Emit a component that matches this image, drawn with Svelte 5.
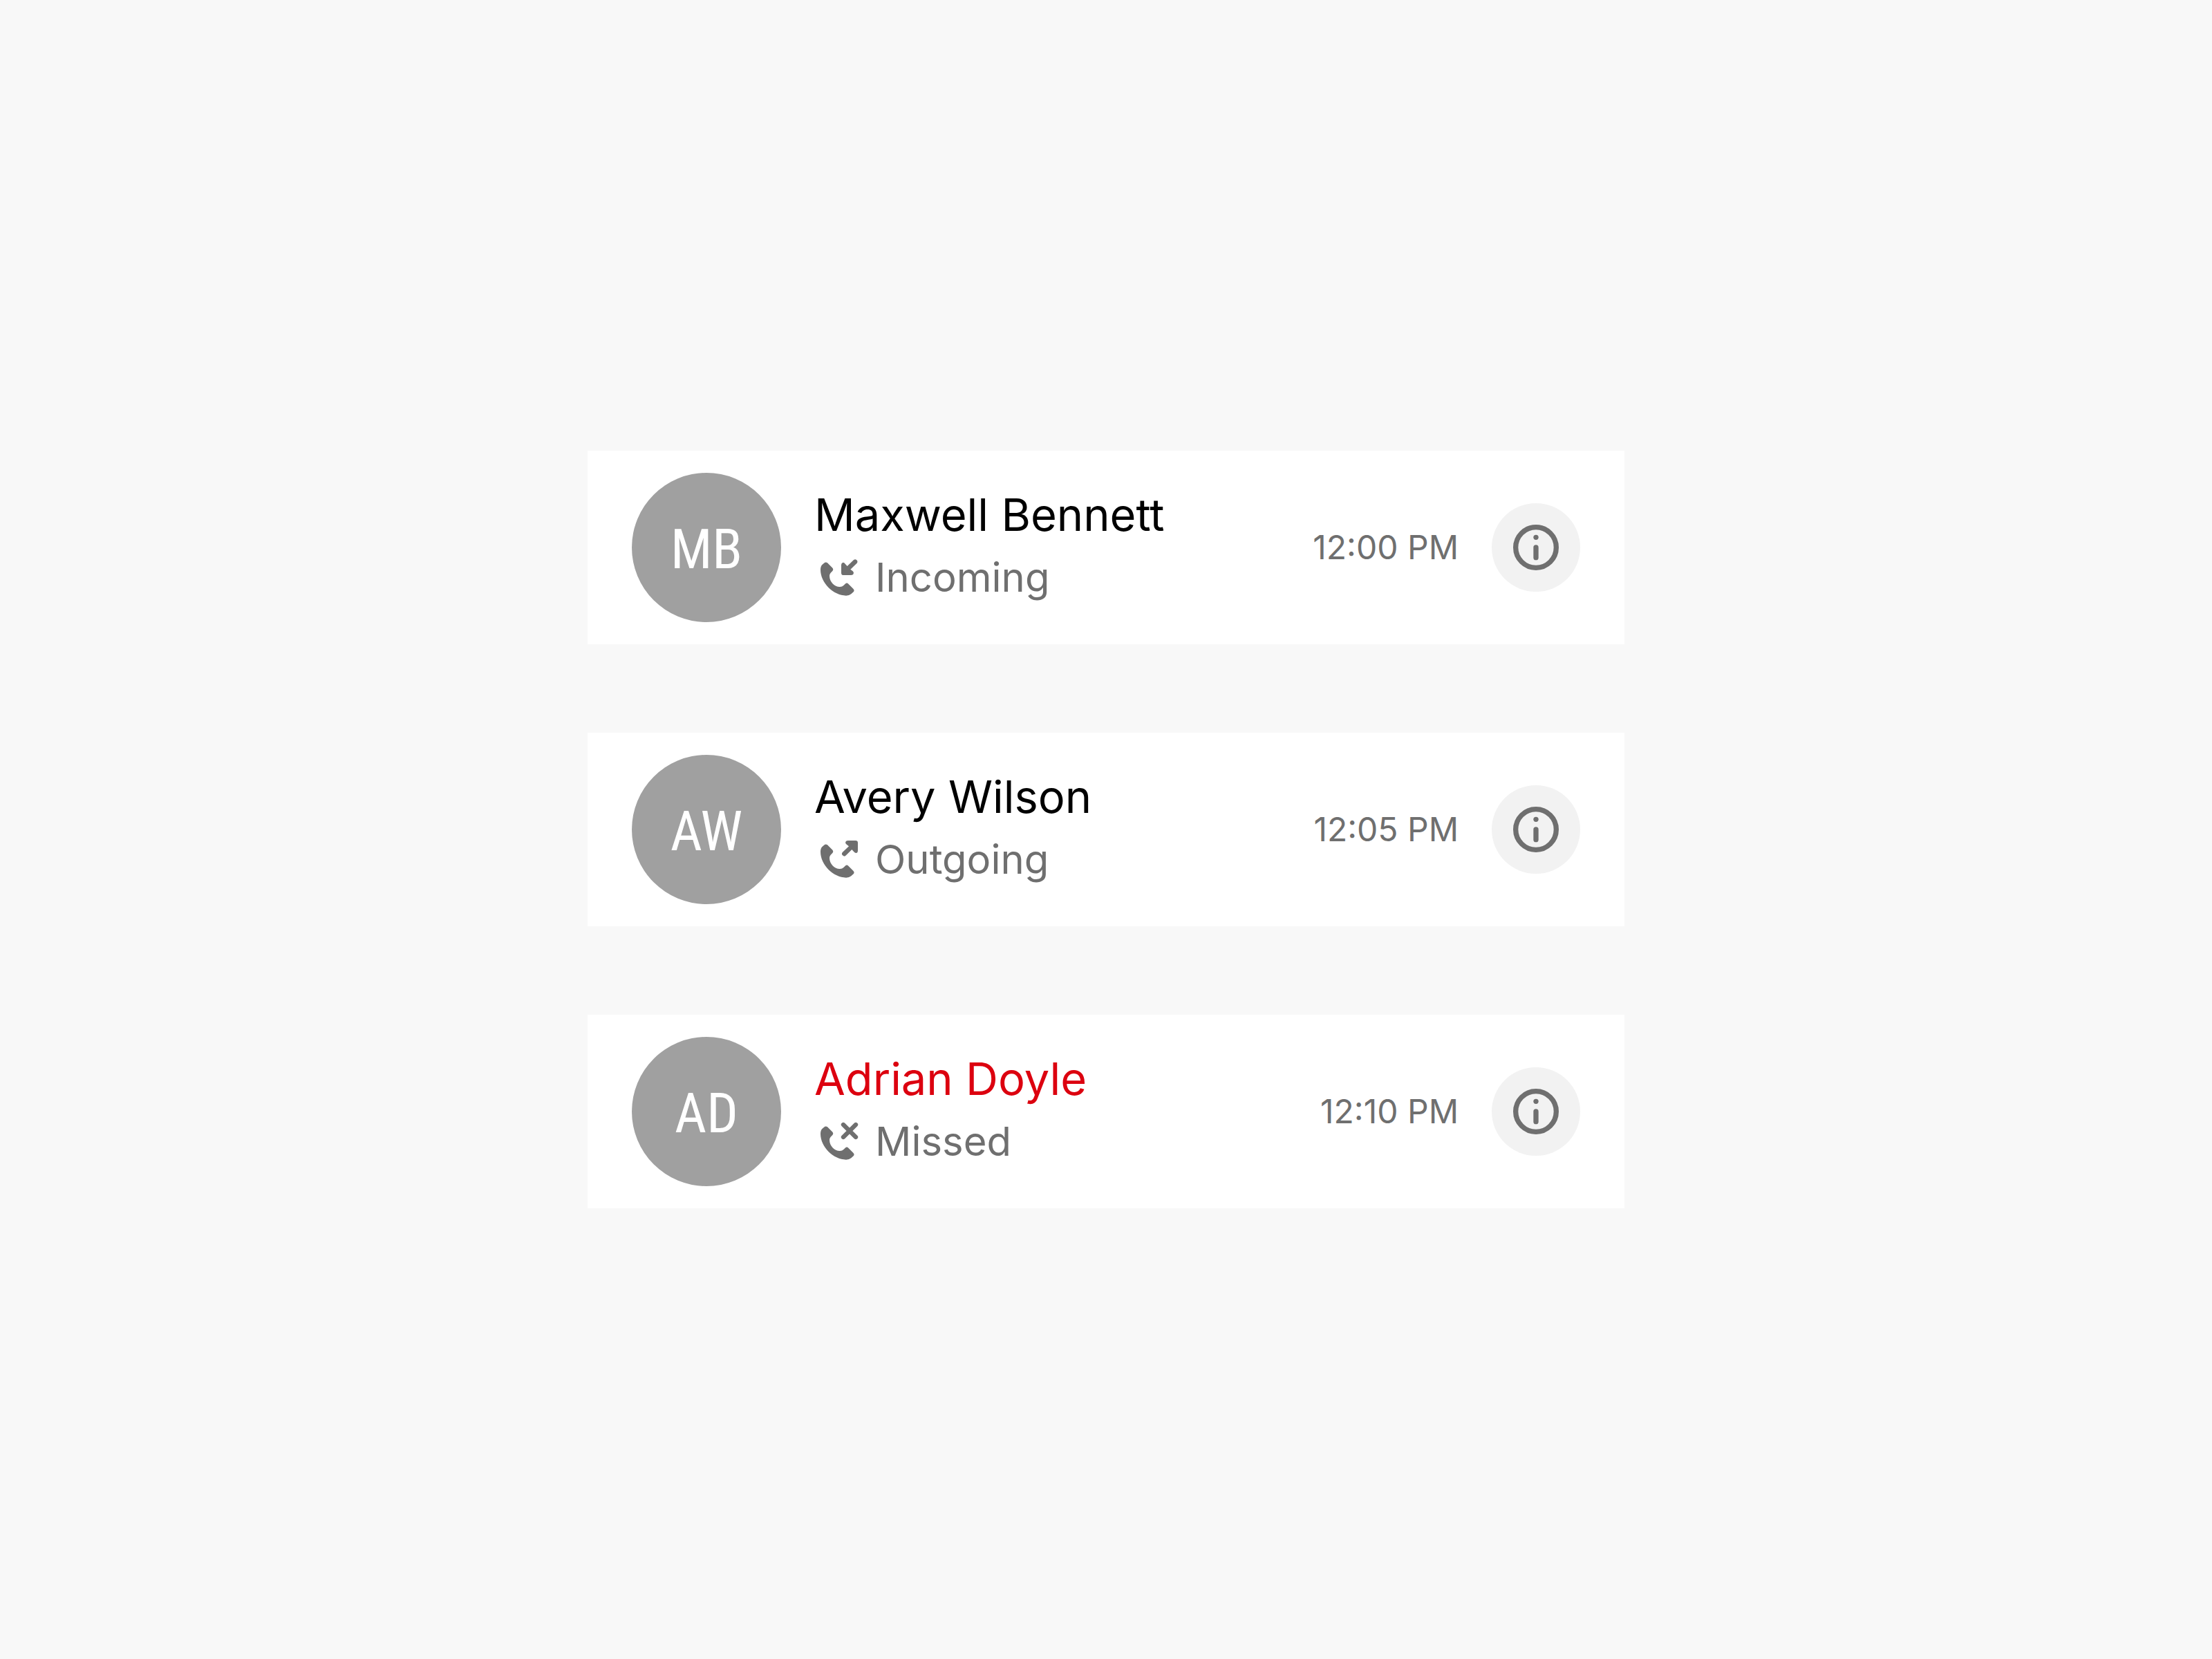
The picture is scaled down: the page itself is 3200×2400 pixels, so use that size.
<script>
  const calls = [
    { name: 'Maxwell Bennett', initials: 'MB', type: 'incoming', label: 'Incoming', time: '12:00 PM' },
    { name: 'Avery Wilson', initials: 'AW', type: 'outgoing', label: 'Outgoing', time: '12:05 PM' },
    { name: 'Adrian Doyle', initials: 'AD', type: 'missed', label: 'Missed', time: '12:10 PM' }
  ];
</script>

<main class="page">
  <ul class="call-list">
    {#each calls as call}
      <li class="call" class:missed={call.type === 'missed'}>
        <div class="avatar" aria-hidden="true">{call.initials}</div>

        <div class="details">
          <div class="name">{call.name}</div>
          <div class="status">
            <svg class="status-icon" viewBox="0 0 216 216" aria-hidden="true">
              <path
                d="M42 47Q50 40 57 46L78 67Q85 74 79 81L71 89Q66 94 66 102C66 128 87 150 111 150Q121 150 127 144L134 137Q141 130 148 137L169 158Q176 165 170 172L160 181Q152 188 138 188C83 188 27 132 27 76Q27 59 35 53Z"
              />
              {#if call.type === 'incoming'}
                <path
                  d="M171 33A10 10 0 0 1 185 47L157 74L167 82Q174 88 170 94Q168 99 160 99H127Q117 99 117 89V55Q117 47 123 45Q129 43 134 50L143 60Z"
                />
              {:else if call.type === 'outgoing'}
                <path
                  d="M179 27Q189 27 189 37V71Q189 79 183 81Q177 82 172 76L163 66L138 91A10 10 0 0 1 123 77L150 52L139 43Q133 38 136 32Q138 27 146 27Z"
                />
              {:else}
                <path class="cross" d="M126 36L180 90M180 36L126 90" />
              {/if}
            </svg>
            <span>{call.label}</span>
          </div>
        </div>

        <time class="time">{call.time}</time>

        <button class="info-btn" type="button" aria-label="Call details for {call.name}">
          <svg viewBox="0 0 24 24" aria-hidden="true">
            <circle class="ring" cx="12" cy="12" r="8" />
            <circle cx="12" cy="8" r="1" />
            <rect x="11" y="11" width="2" height="6" rx="1" />
          </svg>
        </button>
      </li>
    {/each}
  </ul>
</main>

<style>
  :global(body) {
    background: #f8f8f8;
  }

  .page {
    min-height: 100vh;
    display: flex;
    align-items: center;
    justify-content: center;
    font-family: Inter, "Liberation Sans", sans-serif;
    color: #6f6f6f;
  }

  .call-list {
    list-style: none;
    margin: 0;
    padding: 0;
    width: 100%;
    max-width: 1500px;
    display: flex;
    flex-direction: column;
    gap: 128px;
  }

  .call {
    display: flex;
    align-items: center;
    gap: 48px;
    padding: 32px 64px;
    background: #fff;
  }

  .avatar {
    flex: none;
    box-sizing: border-box;
    display: flex;
    align-items: center;
    justify-content: center;
    width: 216px;
    height: 216px;
    padding-top: 6px;
    border-radius: 50%;
    background: #a0a0a0;
    color: #fff;
    font-family: "Roboto Condensed", "Liberation Sans Narrow", Roboto, sans-serif;
    font-size: 80px;
    font-weight: 400;
    line-height: 88px;
  }

  .details {
    flex: 1;
    min-width: 0;
    display: flex;
    flex-direction: column;
    gap: 6px;
  }

  .name {
    font-size: 65px;
    line-height: 80px;
    color: #000;
  }

  .missed .name {
    color: #dc000f;
  }

  .status {
    display: flex;
    align-items: center;
    gap: 16px;
    font-size: 58px;
    line-height: 88px;
  }

  .status-icon {
    flex: none;
    width: 72px;
    height: 72px;
    fill: currentColor;
  }

  .cross {
    stroke: currentColor;
    stroke-width: 19;
    stroke-linecap: round;
  }

  .time {
    font-size: 48px;
    line-height: 64px;
    white-space: nowrap;
  }

  .info-btn {
    flex: none;
    display: flex;
    align-items: center;
    justify-content: center;
    width: 128px;
    height: 128px;
    padding: 0;
    border: none;
    border-radius: 50%;
    background: #f2f2f2;
    color: inherit;
    cursor: pointer;
  }

  .info-btn svg {
    width: 88px;
    height: 88px;
    fill: currentColor;
  }

  .info-btn .ring {
    fill: none;
    stroke: currentColor;
    stroke-width: 2;
  }
</style>
